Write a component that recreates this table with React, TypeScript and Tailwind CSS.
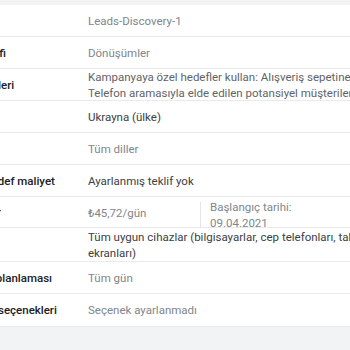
import React from 'react';

type Row = {
  label: string;
  height: string;
  value: React.ReactNode;
};

// Summary rows of the campaign review step
const rows: Row[] = [
  { label: 'Kampanya adı', height: 'h-8', value: <span className="text-[#80868b]">Leads-Discovery-1</span> },
  { label: 'Kampanya hedefi', height: 'h-8', value: <span className="text-[#80868b]">Dönüşümler</span> },
  {
    label: 'Dönüşüm hedefleri',
    height: 'h-8',
    value: (
      <div className="text-[#5f6368]">
        <div>Kampanyaya özel hedefler kullan: Alışveriş sepetine ekleme, Satın alma,</div>
        <div>Telefon aramasıyla elde edilen potansiyel müşteriler</div>
      </div>
    ),
  },
  { label: 'Konumlar', height: 'h-8', value: <span className="text-[#3c4043]">Ukrayna (ülke)</span> },
  { label: 'Diller', height: 'h-8', value: <span className="text-[#80868b]">Tüm diller</span> },
  {
    label: 'İşlem başına hedef maliyet',
    height: 'h-8',
    value: <span className="text-[#3c4043]">Ayarlanmış teklif yok</span>,
  },
  {
    label: 'Bütçe ve tarihler',
    height: 'h-[31px]',
    value: (
      <div className="flex self-stretch text-[#80868b]">
        <div className="flex w-[112px] shrink-0 items-center pt-[2px]">₺45,72/gün</div>
        <div className="mt-[5px] flex flex-col justify-center border-l border-[#e3e5e8] pl-[9px]">
          <div>Başlangıç tarihi:</div>
          <div>09.04.2021</div>
        </div>
      </div>
    ),
  },
  {
    label: 'Cihazlar',
    height: 'h-[34px]',
    value: (
      <div className="text-[#3c4043]">
        <div>Tüm uygun cihazlar (bilgisayarlar, cep telefonları, tabletler ve TV</div>
        <div>ekranları)</div>
      </div>
    ),
  },
  { label: 'Reklam zaman planlaması', height: 'h-8', value: <span className="text-[#80868b]">Tüm gün</span> },
  {
    label: 'Kampanya URL seçenekleri',
    height: 'h-[33px]',
    value: <span className="text-[#80868b]">Seçenek ayarlanmadı</span>,
  },
];

export default function App() {
  return (
    <div className="h-[350px] w-[350px] overflow-hidden bg-[#f1f3f4] pt-[5px] font-['Roboto',sans-serif] text-[11.5px] leading-4">
      <div className="-ml-[83px] w-[760px] bg-white">
        {rows.map((row) => (
          <div key={row.label} className={`flex border-b border-[#e8eaed] ${row.height}`}>
            <div className="flex w-[171px] shrink-0 items-center whitespace-nowrap font-medium text-[#202124]">
              {row.label}
            </div>
            <div className="flex flex-1 items-center whitespace-nowrap">{row.value}</div>
          </div>
        ))}
      </div>
    </div>
  );
}
